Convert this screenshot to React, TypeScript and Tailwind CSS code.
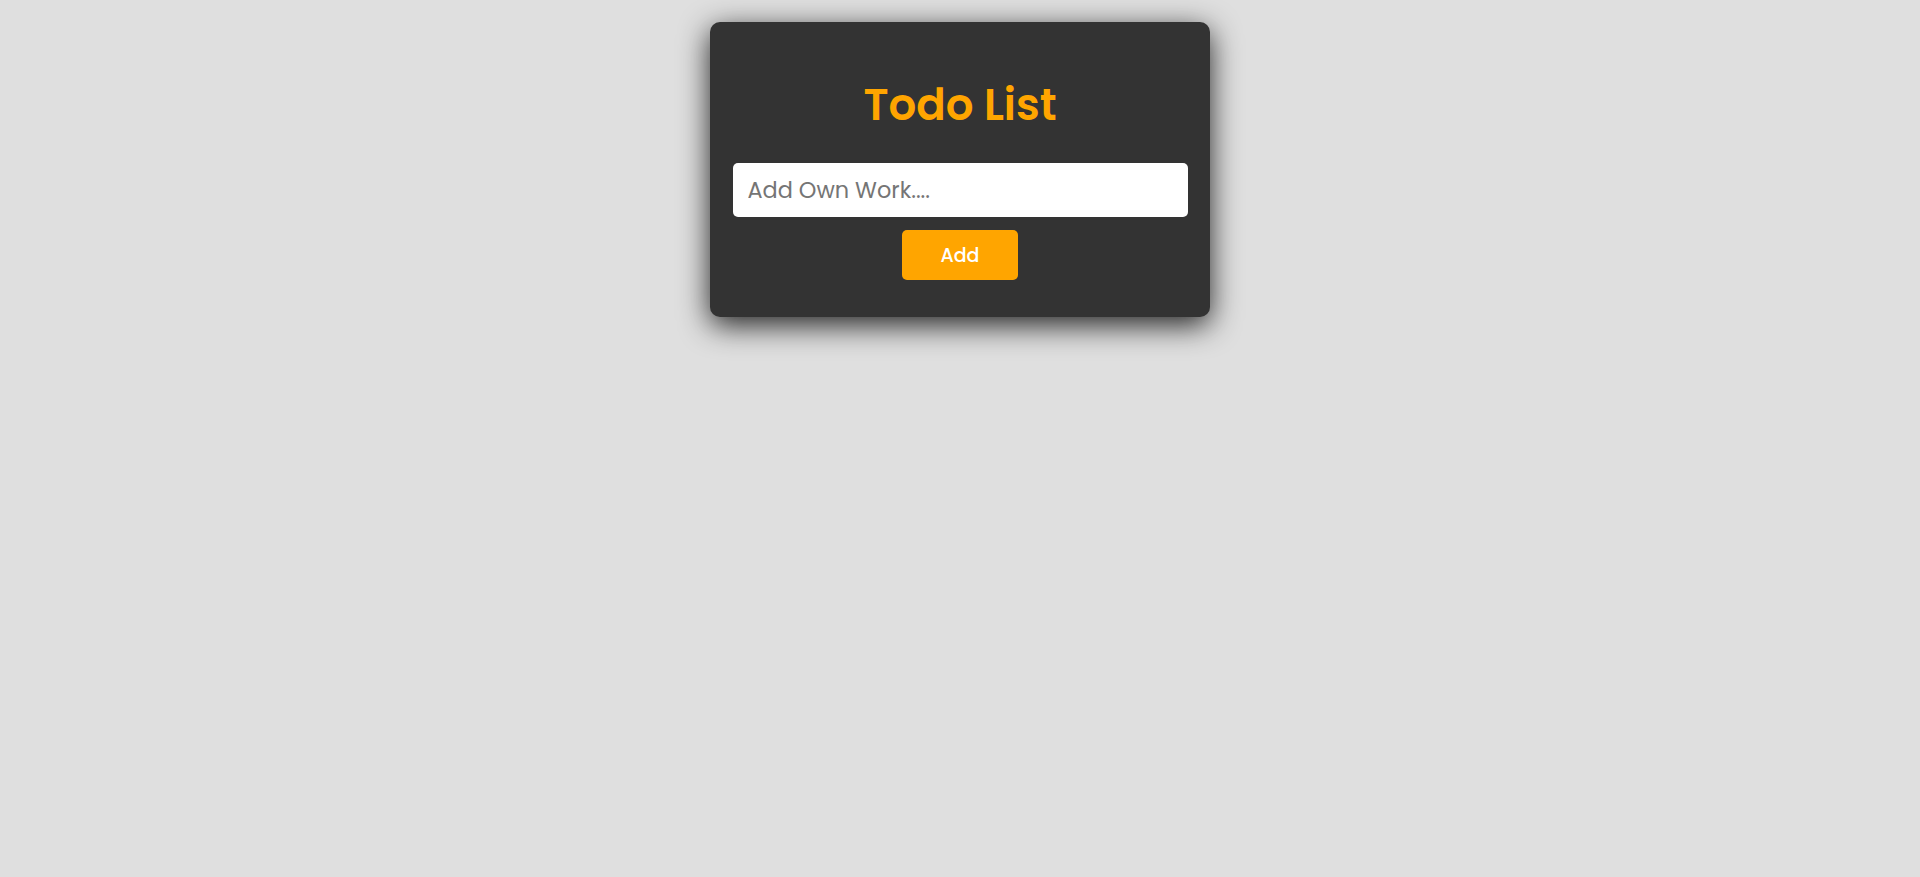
import { useState } from 'react';

export default function App() {
  const [todo, setTodo] = useState('');

  return (
    <div className="min-h-screen bg-[#dfdfdf] pt-[22px] font-['Poppins',Inter,sans-serif]">
      <div className="mx-auto flex w-[500px] flex-col items-center rounded-[10px] bg-[#333333] pt-[52px] pb-[37px] shadow-[0_8px_30px_rgba(0,0,0,0.85)]">
        <h1 className="text-[43.5px] leading-[62px] font-semibold text-[#ffa500]">Todo List</h1>
        <input
          value={todo}
          onChange={(e) => setTodo(e.target.value)}
          placeholder="Add Own Work...."
          className="mt-[27px] h-[54px] w-[455px] rounded-[5px] bg-white px-[15px] text-[22.4px] text-[#333] outline-none placeholder:text-[#757575]"
        />
        <button className="mt-[13px] h-[50px] w-[116px] rounded-[5px] bg-[#ffa500] pt-[2px] text-[19px] font-medium text-white">
          Add
        </button>
      </div>
    </div>
  );
}
